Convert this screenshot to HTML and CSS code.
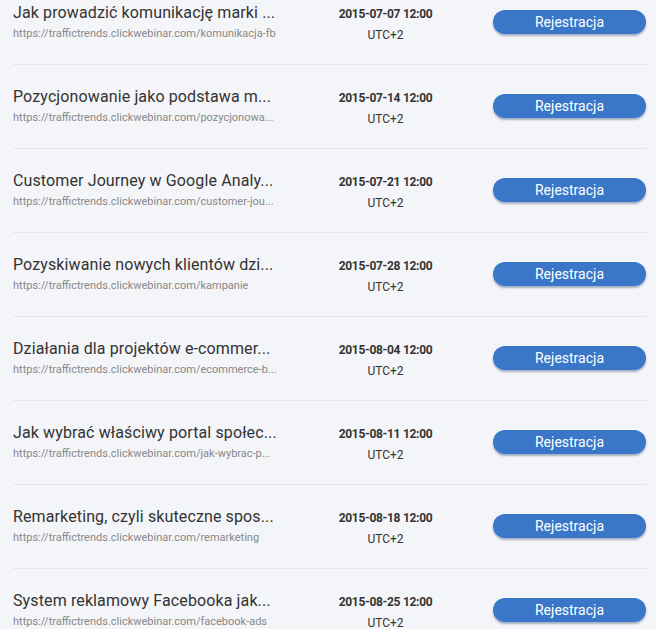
FILE: index.html
```html
<!DOCTYPE html>
<html lang="pl">
<head>
<meta charset="utf-8">
<title>Webinary</title>
<link rel="stylesheet" href="styles.css">
</head>
<body>
<ul class="list">
  <li class="row">
    <div class="info"><div class="title" title="Jak prowadzić komunikację marki na Facebooku">Jak prowadzić komunikację marki ...</div><div class="url">https://traffictrends.clickwebinar.com/komunikacja-fb</div></div>
    <div class="when"><div class="date">2015-07-07 12:00</div><div class="tz">UTC+2</div></div>
    <div class="action"><a class="btn" href="#">Rejestracja</a></div>
  </li>
  <li class="row">
    <div class="info"><div class="title" title="Pozycjonowanie jako podstawa marketingu internetowego">Pozycjonowanie jako podstawa m...</div><div class="url" title="https://traffictrends.clickwebinar.com/pozycjonowanie">https://traffictrends.clickwebinar.com/pozycjonowa...</div></div>
    <div class="when"><div class="date">2015-07-14 12:00</div><div class="tz">UTC+2</div></div>
    <div class="action"><a class="btn" href="#">Rejestracja</a></div>
  </li>
  <li class="row">
    <div class="info"><div class="title" title="Customer Journey w Google Analytics">Customer Journey w Google Analy...</div><div class="url" title="https://traffictrends.clickwebinar.com/customer-journey">https://traffictrends.clickwebinar.com/customer-jou...</div></div>
    <div class="when"><div class="date">2015-07-21 12:00</div><div class="tz">UTC+2</div></div>
    <div class="action"><a class="btn" href="#">Rejestracja</a></div>
  </li>
  <li class="row">
    <div class="info"><div class="title" title="Pozyskiwanie nowych klientów dzięki kampaniom">Pozyskiwanie nowych klientów dzi...</div><div class="url">https://traffictrends.clickwebinar.com/kampanie</div></div>
    <div class="when"><div class="date">2015-07-28 12:00</div><div class="tz">UTC+2</div></div>
    <div class="action"><a class="btn" href="#">Rejestracja</a></div>
  </li>
  <li class="row">
    <div class="info"><div class="title" title="Działania dla projektów e-commerce">Działania dla projektów e-commer...</div><div class="url" title="https://traffictrends.clickwebinar.com/ecommerce-biznes">https://traffictrends.clickwebinar.com/ecommerce-b...</div></div>
    <div class="when"><div class="date">2015-08-04 12:00</div><div class="tz">UTC+2</div></div>
    <div class="action"><a class="btn" href="#">Rejestracja</a></div>
  </li>
  <li class="row">
    <div class="info"><div class="title" title="Jak wybrać właściwy portal społecznościowy">Jak wybrać właściwy portal społec...</div><div class="url" title="https://traffictrends.clickwebinar.com/jak-wybrac-portal">https://traffictrends.clickwebinar.com/jak-wybrac-p...</div></div>
    <div class="when"><div class="date">2015-08-11 12:00</div><div class="tz">UTC+2</div></div>
    <div class="action"><a class="btn" href="#">Rejestracja</a></div>
  </li>
  <li class="row">
    <div class="info"><div class="title" title="Remarketing, czyli skuteczne sposoby na powrót klienta">Remarketing, czyli skuteczne spos...</div><div class="url">https://traffictrends.clickwebinar.com/remarketing</div></div>
    <div class="when"><div class="date">2015-08-18 12:00</div><div class="tz">UTC+2</div></div>
    <div class="action"><a class="btn" href="#">Rejestracja</a></div>
  </li>
  <li class="row">
    <div class="info"><div class="title" title="System reklamowy Facebooka jako narzędzie sprzedaży">System reklamowy Facebooka jak...</div><div class="url">https://traffictrends.clickwebinar.com/facebook-ads</div></div>
    <div class="when"><div class="date">2015-08-25 12:00</div><div class="tz">UTC+2</div></div>
    <div class="action"><a class="btn" href="#">Rejestracja</a></div>
  </li>
</ul>
</body>
</html>
```
FILE: styles.css
```css
html, body {
  margin: 0;
  padding: 0;
  background: #f4f5f8;
  overflow: hidden;
  font-family: Roboto, "Noto Sans", sans-serif;
}
.list {
  list-style: none;
  margin: -19px 10px 0 13px;
  padding: 0;
}
.row {
  display: grid;
  grid-template-columns: 270px 210px 153px;
  height: 84px;
  box-sizing: border-box;
  border-bottom: 1px solid #e3e5e9;
  align-items: start;
}
.info {
  padding-top: 22px;
  min-width: 0;
}
.title {
  font-size: 16px;
  line-height: 20px;
  letter-spacing: 0.12px;
  color: #333;
  white-space: nowrap;
  overflow: hidden;
}
.url {
  margin-top: 4px;
  font-size: 11px;
  line-height: 14px;
  color: #888;
  white-space: nowrap;
  overflow: hidden;
}
.when {
  padding-top: 25px;
  padding-right: 5px;
  text-align: center;
  font-size: 12px;
  line-height: 16px;
  color: #333;
}
.date {
  font-weight: bold;
  letter-spacing: -0.3px;
}
.tz {
  margin-top: 5px;
}
.action {
  padding-top: 29px;
}
.btn {
  display: block;
  height: 24px;
  line-height: 24px;
  border-radius: 12px;
  background: #3a77c8;
  color: #fff;
  text-align: center;
  font-size: 14px;
  text-decoration: none;
  box-shadow: 0 2px 2px rgba(20, 50, 100, 0.35);
}
```
